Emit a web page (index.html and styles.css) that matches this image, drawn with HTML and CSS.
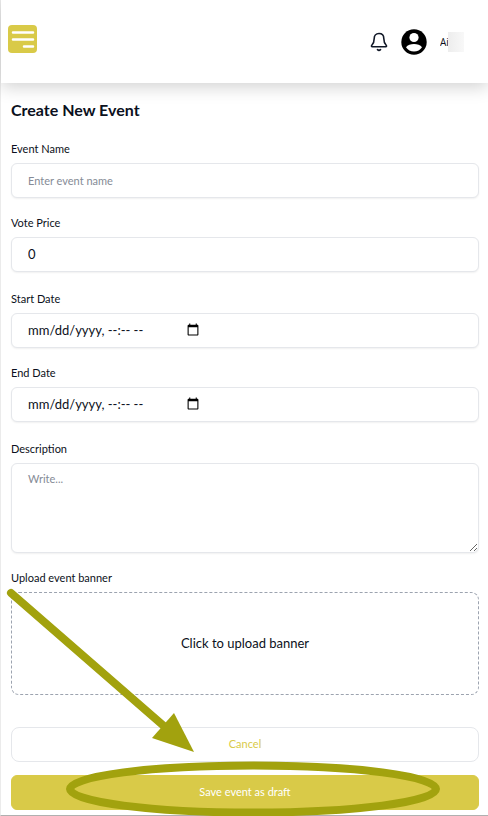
FILE: index.html
```html
<!DOCTYPE html>
<html lang="en">
<head>
    <meta charset="UTF-8">
    <meta name="viewport" content="width=device-width, initial-scale=1.0">
    <title>Create New Event</title>
    <link rel="stylesheet" href="styles.css">
</head>
<body>
    <div class="page">
        <header class="topbar">
            <button type="button" class="icon-btn" aria-label="Menu">
                <svg width="30" height="28" viewBox="0 0 30 28">
                    <rect width="29" height="28" rx="4" fill="#d9ca48"/>
                    <path d="M5 7.500h20M5 14.500h20M16 21.500h9" stroke="#fff" stroke-width="2.500" stroke-linecap="round"/>
                </svg>
            </button>
            <div class="user">
                <button type="button" class="icon-btn" aria-label="Notifications">
                    <svg width="18" height="20" viewBox="0 0 18 20" fill="none" stroke="#111827" stroke-width="1.600" stroke-linecap="round" stroke-linejoin="round">
                        <path d="M9 1.500C5.800 1.500 4.200 3.800 4.200 6.500C4.200 10.500 3.300 11.800 1.800 13.300C1.200 14 1.400 14.800 2.300 14.800H15.700C16.600 14.800 16.800 14 16.200 13.300C14.700 11.800 13.800 10.500 13.800 6.500C13.800 3.800 12.200 1.500 9 1.500Z"/>
                        <path d="M7.500 17.600Q9 19 10.500 17.600"/>
                    </svg>
                </button>
                <button type="button" class="icon-btn" aria-label="Account">
                    <svg width="26" height="26" viewBox="0 0 26 26">
                        <circle cx="13" cy="13" r="12.700" fill="#000"/>
                        <circle cx="13" cy="8.500" r="4.600" fill="#fff"/>
                        <path d="M5 18.200C6.500 15.800 9.800 14.900 13 14.900S19.500 15.800 21 18.200C19.300 21 16.300 22.500 13 22.500S6.700 21 5 18.200Z" fill="#fff"/>
                    </svg>
                </button>
                <span class="username">Ai<span class="mask"></span></span>
            </div>
        </header>

        <form class="event-form">
            <h1>Create New Event</h1>
            <div class="group">
                <div class="field">
                    <label for="name">Event Name</label>
                    <input type="text" id="name" class="box" placeholder="Enter event name">
                </div>
                <div class="field">
                    <label for="price">Vote Price</label>
                    <input type="text" inputmode="numeric" id="price" class="box" value="0">
                </div>
            </div>
            <div class="group">
                <div class="field">
                    <label for="start">Start Date</label>
                    <div class="box date-box">
                        <input type="datetime-local" id="start">
                    </div>
                </div>
                <div class="field">
                    <label for="end">End Date</label>
                    <div class="box date-box">
                        <input type="datetime-local" id="end">
                    </div>
                </div>
            </div>
            <div class="group">
                <div class="field">
                    <label for="description">Description</label>
                    <textarea id="description" class="box" placeholder="Write..."></textarea>
                </div>
                <div class="field">
                    <label for="banner">Upload event banner</label>
                    <button type="button" id="banner" class="upload">Click to upload banner</button>
                </div>
            </div>
            <div class="actions">
                <button type="button" class="btn">Cancel</button>
                <button type="submit" class="btn primary">Save event as draft</button>
            </div>
        </form>

        <!-- arrow and ring pointing at the save button -->
        <svg class="pointer" width="440" height="230" viewBox="0 0 440 230">
            <path d="M11 7L165 141" stroke="#a2a20e" stroke-width="8" stroke-linecap="round"/>
            <path d="M174 127L152 152L194 166Z" fill="#a2a20e"/>
            <ellipse cx="253" cy="203" rx="183" ry="23.500" fill="none" stroke="#a2a20e" stroke-width="8"/>
        </svg>
    </div>
</body>
</html>
```
FILE: styles.css
```css
* {
    box-sizing: border-box;
}

body {
    margin: 0;
    background: #fff;
    color: #0b1020;
    font-family: Lato, "Liberation Sans", sans-serif;
    font-size: 11px;
    line-height: 16px;
}

.page {
    position: relative;
    border-left: 1px solid #ebebeb;
    border-bottom: 1px solid #b0b0b0;
}

.topbar {
    display: flex;
    align-items: center;
    justify-content: space-between;
    height: 83px;
    padding: 0 24px 6px 7px;
    box-shadow: 0 4px 16px rgba(0, 0, 0, 0.18);
}

.icon-btn {
    padding: 0;
    border: none;
    background: none;
    cursor: pointer;
}

.icon-btn svg {
    display: block;
}

.user {
    display: flex;
    align-items: center;
    gap: 13px;
    padding-top: 6px;
}

.username {
    display: flex;
    align-items: center;
    width: 24px;
    height: 20px;
    overflow: hidden;
    position: relative;
    font-family: "Open Sans", sans-serif;
    font-size: 10px;
}

.mask {
    position: absolute;
    right: 0;
    width: 16px;
    height: 20px;
    background: linear-gradient(90deg, #ededed, #f8f8f8);
}

.event-form {
    padding: 17px 9px 5px 10px;
}

h1 {
    margin: 0 0 21px;
    font-size: 16px;
    line-height: 20px;
    font-weight: 700;
}

.group {
    display: flex;
    flex-direction: column;
    gap: 17px;
    margin-bottom: 19px;
}

.field {
    display: flex;
    flex-direction: column;
    gap: 6px;
}

.box {
    width: 100%;
    height: 35px;
    padding: 0 16px 2px;
    border: 1px solid #e5e7eb;
    border-radius: 6px;
    background: #fff;
    box-shadow: 0 1px 2px rgba(0, 0, 0, 0.06);
    color: #0b1020;
    font-family: inherit;
    font-size: 13px;
}

textarea.box {
    height: 90px;
    padding: 7px 16px;
    font-size: 11px;
    line-height: 16px;
    resize: vertical;
}

.box::placeholder {
    color: #858b96;
    font-size: 11px;
}

.date-box {
    display: flex;
    align-items: center;
}

.date-box input {
    width: 173px;
    padding: 0;
    border: none;
    background: none;
    color: inherit;
    font: inherit;
}

.date-box input::-webkit-datetime-edit-month-field,
.date-box input::-webkit-datetime-edit-day-field,
.date-box input::-webkit-datetime-edit-year-field,
.date-box input::-webkit-datetime-edit-hour-field,
.date-box input::-webkit-datetime-edit-minute-field,
.date-box input::-webkit-datetime-edit-ampm-field {
    padding: 0;
}

.date-box input::-webkit-calendar-picker-indicator {
    width: 14px;
    height: 14px;
    padding: 1px;
}

.upload {
    height: 103px;
    padding-bottom: 3px;
    border: 1px dashed #9ca3af;
    border-radius: 8px;
    background: #fff;
    color: #0b1020;
    font-family: inherit;
    font-size: 13px;
    cursor: pointer;
}

.actions {
    display: flex;
    flex-direction: column;
    gap: 13px;
    padding-top: 13px;
}

.btn {
    height: 35px;
    padding-bottom: 3px;
    border: 1px solid #e5e7eb;
    border-radius: 8px;
    background: #fff;
    color: #d9ca48;
    font-family: inherit;
    font-size: 11px;
    cursor: pointer;
}

.primary {
    border-color: #d9ca48;
    border-radius: 6px;
    background: #d9ca48;
    color: #fff;
}

.pointer {
    position: absolute;
    left: -1px;
    bottom: -1px;
    pointer-events: none;
}
```
